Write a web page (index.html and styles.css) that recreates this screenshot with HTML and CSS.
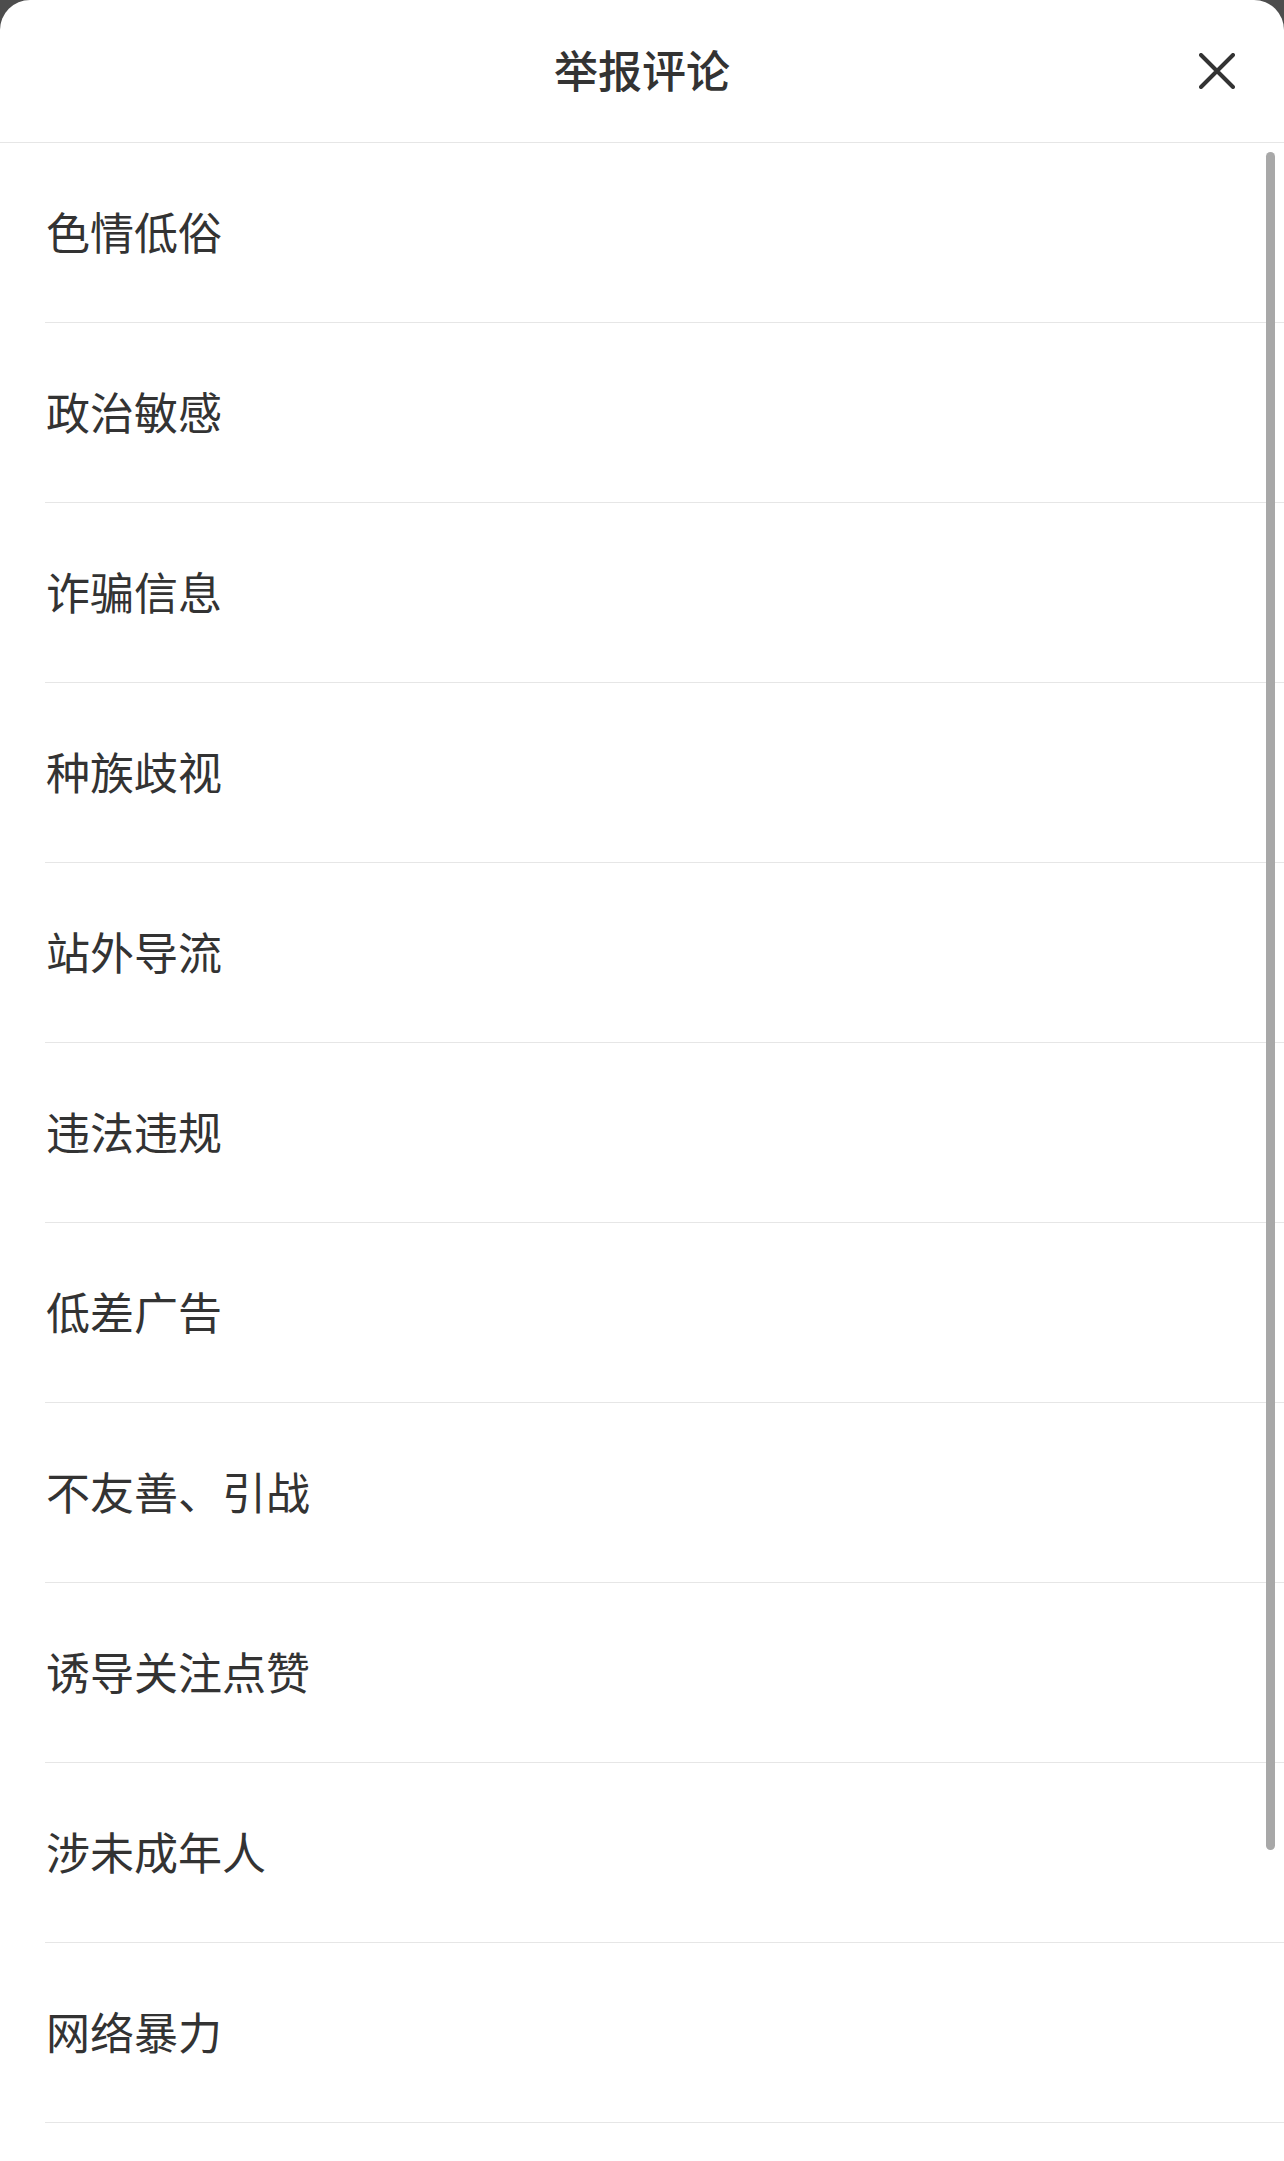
FILE: index.html
```html
<!DOCTYPE html>
<html lang="zh-CN">
<head>
    <meta charset="UTF-8">
    <meta name="viewport" content="width=device-width, initial-scale=1.0">
    <title>举报评论</title>
    <link rel="stylesheet" href="styles.css">
</head>
<body>

    <!-- Report Sheet -->
    <div class="sheet">
        <div class="sheet-header">
            <span></span>
            <h2 class="sheet-title">举报评论</h2>
            <button class="close-btn" aria-label="关闭">
                <svg width="36" height="36" viewBox="0 0 36 36">
                    <path d="M2 2 L34 34 M34 2 L2 34" stroke="#333" stroke-width="4" stroke-linecap="round" fill="none"/>
                </svg>
            </button>
        </div>

        <!-- Reasons -->
        <ul class="reason-list">
            <li>色情低俗</li>
            <li>政治敏感</li>
            <li>诈骗信息</li>
            <li>种族歧视</li>
            <li>站外导流</li>
            <li>违法违规</li>
            <li>低差广告</li>
            <li>不友善、引战</li>
            <li>诱导关注点赞</li>
            <li>涉未成年人</li>
            <li>网络暴力</li>
        </ul>

        <div class="scroll-thumb"></div>
    </div>

</body>
</html>
```

FILE: styles.css
```css
body {
    margin: 0;
    background-color: #4d4d4d;
    font-family: "Noto Sans CJK SC", "Noto Sans", sans-serif;
    color: #333;
}

/* Sheet */
.sheet {
    position: relative;
    background-color: #fff;
    border-radius: 30px 30px 0 0;
    height: 2161px;
    overflow: hidden;
}

/* Header */
.sheet-header {
    height: 142px;
    border-bottom: 1px solid #e6e6e6;
    display: grid;
    grid-template-columns: 1fr auto 1fr;
    align-items: center;
}

.sheet-title {
    margin: 0 0 4px;
    font-size: 44px;
    font-weight: 500;
    color: #333;
}

.close-btn {
    justify-self: end;
    margin-right: 49px;
    padding: 0;
    border: none;
    background: none;
    display: flex;
    cursor: pointer;
}

/* Reason list */
.reason-list {
    list-style: none;
    margin: 0;
    padding: 0;
}

.reason-list li {
    height: 175px;
    margin-left: 45px;
    padding: 0 0 4px 1px;
    border-bottom: 1px solid #e6e6e6;
    display: flex;
    align-items: center;
    font-size: 44px;
    color: #333;
}

/* Scrollbar overlay */
.scroll-thumb {
    position: absolute;
    top: 152px;
    right: 9px;
    width: 9px;
    height: 1698px;
    border-radius: 5px;
    background-color: #a8a8a8;
}
```
